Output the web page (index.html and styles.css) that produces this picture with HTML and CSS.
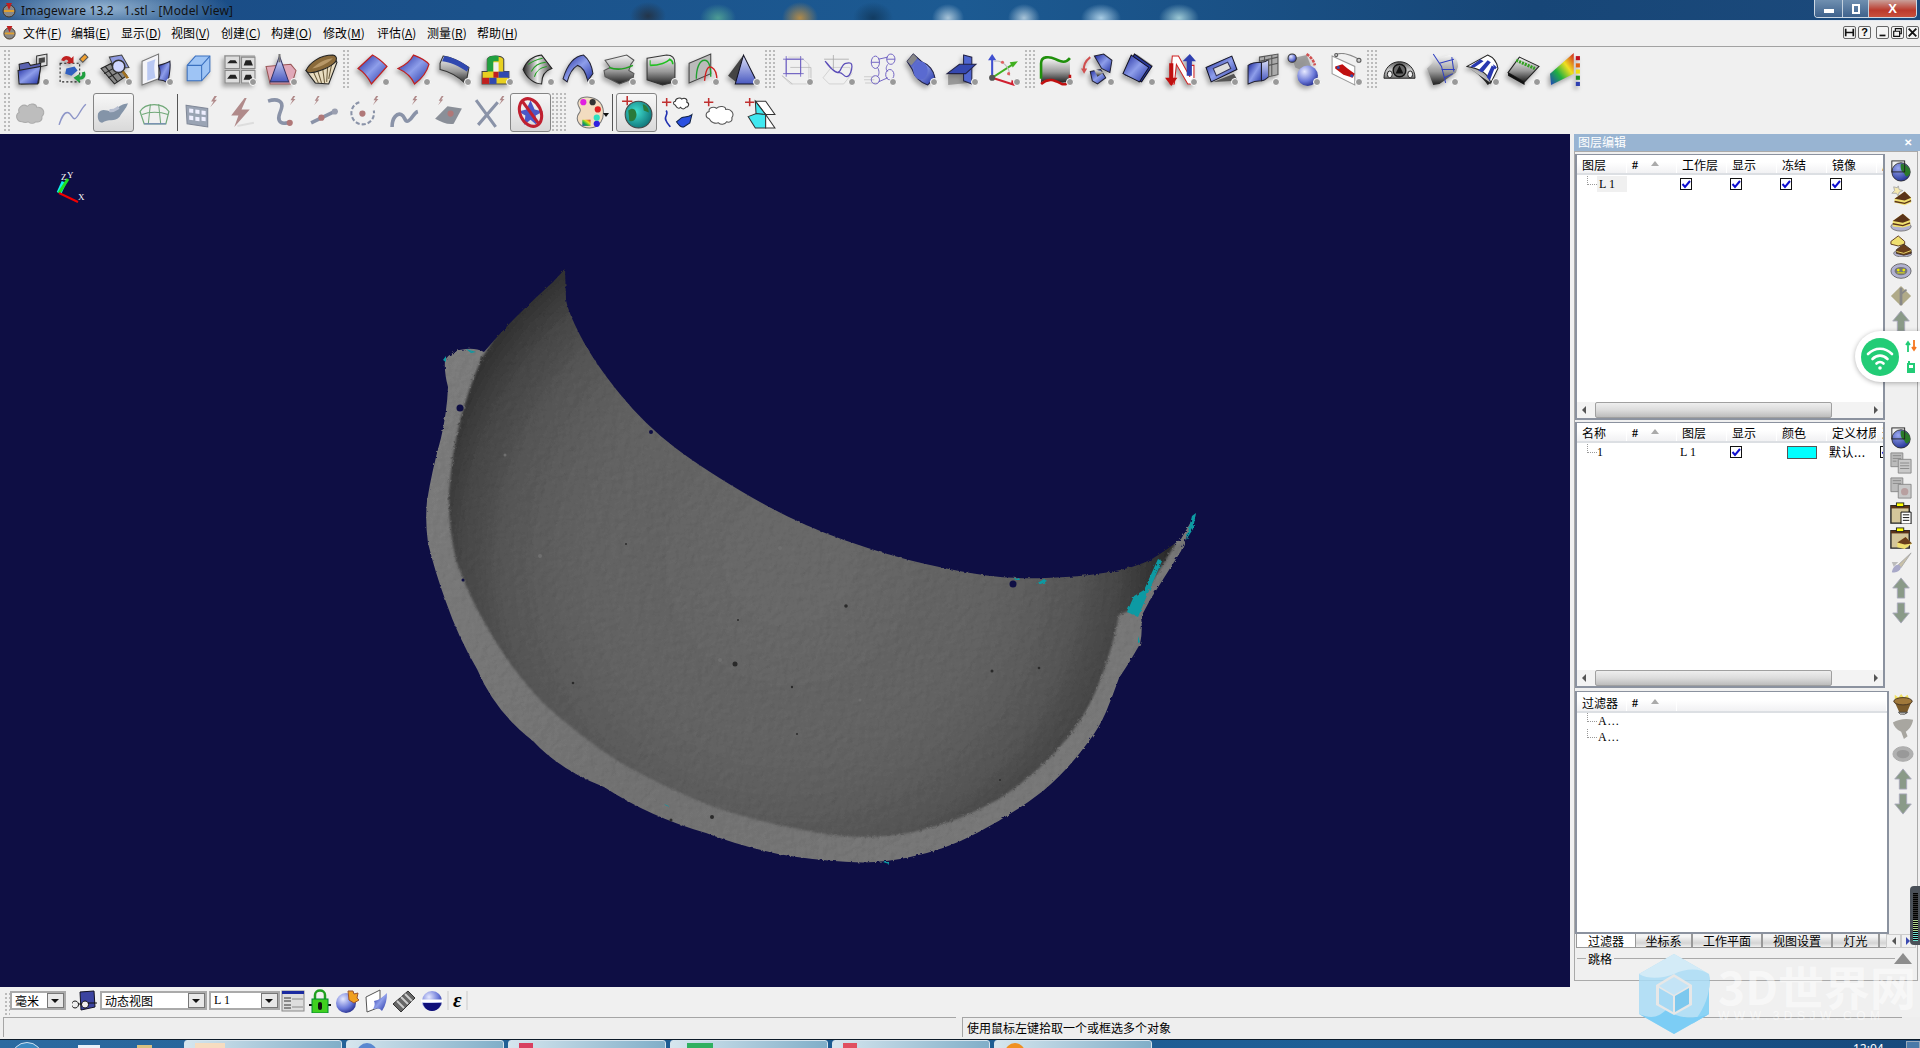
FILE: index.html
```html
<!DOCTYPE html>
<html lang="en">
<head>
    <meta charset="UTF-8">
    <title>Imageware 13.2 1.stl - [Model View]</title>
    <link rel="stylesheet" href="styles.css">
</head>
<body>

<!-- shared icons -->
<svg class="sprite" width="0" height="0">
  <defs>
    <linearGradient id="gb" x1="0" y1="0" x2="1" y2="1"><stop offset="0" stop-color="#18249a"/><stop offset=".5" stop-color="#8e9eea"/><stop offset="1" stop-color="#1f2fa2"/></linearGradient>
    <linearGradient id="gm" x1="0" y1="0" x2="0" y2="1"><stop offset="0" stop-color="#f6f6f6"/><stop offset=".55" stop-color="#9a9a9a"/><stop offset="1" stop-color="#1e1e1e"/></linearGradient>
    <linearGradient id="gd" x1="0" y1="0" x2="1" y2="0"><stop offset="0" stop-color="#222"/><stop offset=".5" stop-color="#eee"/><stop offset="1" stop-color="#444"/></linearGradient>
    <linearGradient id="gl" x1="0" y1="0" x2="0" y2="1"><stop offset="0" stop-color="#dfe3fb"/><stop offset="1" stop-color="#4a5ac0"/></linearGradient>
    <linearGradient id="gr" x1="0" y1="1" x2="1" y2="0"><stop offset="0" stop-color="#2040c0"/><stop offset=".35" stop-color="#20b040"/><stop offset=".65" stop-color="#f0e020"/><stop offset="1" stop-color="#d02020"/></linearGradient>
    <linearGradient id="gc" x1="0" y1="0" x2="0" y2="1"><stop offset="0" stop-color="#555"/><stop offset=".5" stop-color="#ccc"/><stop offset="1" stop-color="#777"/></linearGradient>
    <radialGradient id="gball" cx=".35" cy=".3" r=".8"><stop offset="0" stop-color="#e6e9ff"/><stop offset=".6" stop-color="#6a78d8"/><stop offset="1" stop-color="#1a2280"/></radialGradient>
    <radialGradient id="gearth" cx=".35" cy=".3" r=".8"><stop offset="0" stop-color="#9aa8f0"/><stop offset="1" stop-color="#1a2a90"/></radialGradient>
    <radialGradient id="gteal" cx=".4" cy=".4" r=".7"><stop offset="0" stop-color="#40e0d0"/><stop offset="1" stop-color="#0a6a70"/></radialGradient>

    <symbol id="bolt" viewBox="0 0 32 32"><path d="M25 1l-5 8h3l-4 7 8-9h-3l4-6z" fill="#b08a8a"/></symbol>

    <symbol id="t-open" viewBox="0 0 32 32"><path d="M20 3l10-2v11l-10 2z" fill="#ddd" stroke="#333"/><path d="M22 5l6-1v5l-6 1z" fill="#444"/><path d="M3 11l9-2 2 3 10-2-2 19-17 1z" fill="#5a62b0" stroke="#222"/><path d="M2 17l22-4-3 17-18 0z" fill="url(#gb)" stroke="#222"/></symbol>
    <symbol id="t-edit" viewBox="0 0 32 32"><rect x="3" y="10" width="19" height="18" fill="none" stroke="#222" stroke-dasharray="2 2"/><path d="M4 7c2-5 7-5 10-2l2-2v7h-7l2-2c-1-2-3-2-4 0z" fill="#c02020"/><path d="M22 6l5-5 3 3-5 5z" fill="#f0a030" stroke="#555"/><path d="M9 15l8-2 3 4-6 5-6-2z" fill="#3060c0"/><path d="M27 18c2 5-1 8-5 8v3l-6-5 6-4v3c2 0 3-2 2-4z" fill="#20a040"/></symbol>
    <symbol id="t-mesh" viewBox="0 0 32 32"><path d="M2 15l14-7 11 14-12 8z" fill="#888" stroke="#222"/><path d="M6 13l12 15M11 10l12 15M5 20l14-8M9 24l14-8" stroke="#222" fill="none"/><path d="M10 4l12-2 7 12-14 1z" fill="#8f9ae0" stroke="#444"/><circle cx="19" cy="13" r="6" fill="#cfd6ff" stroke="#333" stroke-width="1.5"/><path d="M23 18l6 8" stroke="#a07020" stroke-width="2.5"/></symbol>
    <symbol id="t-planes" viewBox="0 0 32 32"><path d="M2 8l16-7v24L2 31z" fill="#f4f4f8" stroke="#777"/><path d="M7 9l8-3c-2 6-1 13 0 18l-8 3z" fill="#b9c8f2"/><path d="M18 12c4-1 8-2 11-4 1 7-1 15-2 21-3-2-6-3-9-3 2-5 2-9 0-14z" fill="url(#gb)" stroke="#223"/></symbol>
    <symbol id="t-cube" viewBox="0 0 32 32"><path d="M6 12l8-9h14v15l-8 9H6z" fill="#9ec4f5" stroke="#3a70c0"/><path d="M6 12h14v15M20 12l8-9" fill="none" stroke="#3a70c0"/></symbol>
    <symbol id="t-panel" viewBox="0 0 32 32"><path d="M1 2h30v28H1z" fill="#bbb"/><path d="M2 3h14v12H2zM18 4h13v11H18zM2 17h14v12H2zM18 17h13v12H18z" fill="#ddd" stroke="#888"/><path d="M4 10h10l-2-3H7zM20 12h9l-2-5h-5zM4 25h10l-2-4H7zM20 26h9l-2-5h-5z" fill="#222"/></symbol>
    <symbol id="t-pink" viewBox="0 0 32 32"><path d="M2 13l24-2 5 6-4 13-21 0z" fill="#e0a8b8" stroke="#955"/><path d="M15 3l-9 25h18z" fill="url(#gl)" stroke="#336"/><path d="M15 1v8" stroke="#777" stroke-width="2"/></symbol>
    <symbol id="t-filter" viewBox="0 0 32 32"><path d="M1 17L5 14 28 3l3 6-8 21-13-1z" fill="#e8dcc0" stroke="#222"/><path d="M8 18l5 11M12 16l4 13M17 14l2 15M22 12l-1 16M26 10l-3 15" stroke="#6a5a3a"/><path d="M1 17C4 10 14 2 27 2c5 1 4 6 1 8C22 15 9 20 3 19z" fill="#8a6a3a" stroke="#222"/><path d="M7 15c5-5 12-9 20-10-5 5-13 9-20 10z" fill="#b89868"/></symbol>
    <symbol id="t-surf1" viewBox="0 0 32 32"><path d="M2 15L16 2c4 2 9 6 14 11L15 30C12 24 7 18 2 15z" fill="url(#gb)" stroke="#c02020" stroke-width="1.2"/></symbol>
    <symbol id="t-surf2" viewBox="0 0 32 32"><path d="M1 15C8 12 13 8 16 2c5 2 11 4 15 9-2 7-7 14-14 19-3-7-9-12-16-15z" fill="url(#gb)" stroke="#c02020" stroke-width="1.2"/></symbol>
    <symbol id="t-metal" viewBox="0 0 32 32"><path d="M2 10l3-7c8 1 16 5 25 11l-3 16C20 23 11 18 2 16z" fill="url(#gm)" stroke="#333"/><path d="M4 8l2-5c8 1 16 5 24 11l-2 4C21 13 12 9 4 8z" fill="#3048b0"/></symbol>
    <symbol id="t-patch" viewBox="0 0 32 32"><path d="M3 30V18h5V6c2-4 14-4 16 0v12h5v12z" fill="#e8d020" stroke="#444"/><path d="M8 18h6V8h5V3c-5-1-10 0-11 3z" fill="#20a040"/><path d="M14 18h5v6h-5z" fill="#c02020"/><path d="M19 18h10v6H19z" fill="#3048b0"/><path d="M3 24h7v6H3z" fill="#c02020"/><path d="M10 24h7v6h-7z" fill="#3048b0"/><path d="M14 18V9h5v9" fill="#f0f0f0"/></symbol>
    <symbol id="t-green" viewBox="0 0 32 32"><path d="M2 16C5 8 12 3 20 2l10 13c-7 2-10 7-10 15C13 30 6 25 2 16z" fill="url(#gd)" stroke="#222"/><path d="M7 11c4-3 9-5 14-6M10 18c3-6 7-8 14-9M13 23c2-6 5-9 12-10" stroke="#20a020" fill="none"/></symbol>
    <symbol id="t-arch" viewBox="0 0 32 32"><path d="M1 25C5 12 11 3 21 2c5 4 8 10 9 18l-5 7C23 19 19 13 15 12 10 15 7 20 5 28z" fill="url(#gb)" stroke="#223"/></symbol>
    <symbol id="t-fold" viewBox="0 0 32 32"><path d="M2 7l21-5 7 5-3 4-2 6 5 3-1 5-13 5-14-7-1-6 6-3z" fill="url(#gm)" stroke="#555"/><path d="M6 14c8 3 15 2 23-2" stroke="#20a020" stroke-width="1.5" fill="none"/></symbol>
    <symbol id="t-sheet" viewBox="0 0 32 32"><path d="M2 5l19-3c6 0 8 4 8 8v18L17 31 2 26z" fill="url(#gm)" stroke="#333"/><path d="M5 12c9 0 17-3 19-6 2 1 3 3 3 5" stroke="#20c020" stroke-width="1.5" fill="none"/><path d="M5 12v-5" stroke="#20c020"/></symbol>
    <symbol id="t-plane" viewBox="0 0 32 32"><path d="M3 10L24 1v19L3 29z" fill="#bbb" stroke="#444"/><path d="M10 25c0-10 3-18 8-18s6 8 6 16" stroke="#20a030" fill="none" stroke-width="1.3"/><path d="M18 27c1-10 3-15 7-13s5 8 5 13" stroke="#d02020" fill="none" stroke-width="1.3"/></symbol>
    <symbol id="t-pyr" viewBox="0 0 32 32"><path d="M16 2L1 22l9 7z" fill="#444"/><path d="M16 2L8 30h22z" fill="url(#gl)" stroke="#112"/></symbol>
    <symbol id="t-wire" viewBox="0 0 32 32"><path d="M2 22l8 8h18V11l-8-7H8" fill="none" stroke="#ccc" stroke-width=".8"/><path d="M2 22l10 8M10 14h20v13" fill="none" stroke="#bbb" stroke-width=".8"/><path d="M6 6h14v14H6zM6 3v20M3 6h20M20 3v20M3 20h20" fill="none" stroke="#6a5cc0" stroke-width=".8"/></symbol>
    <symbol id="t-wire2" viewBox="0 0 32 32"><path d="M2 24l8-10h18l2 6-8 10H8z" fill="none" stroke="#ccc" stroke-width=".8"/><path d="M12 2v14M3 6h24" stroke="#aaa" stroke-width=".8"/><path d="M4 8c6 6 8 11 12 11s3-8 8-9 6 0 6 3-2 10-5 10-4-4-7-4-6-2-9-5-5-6-5-6z" fill="none" stroke="#5a4cb8" stroke-width="1.200"/></symbol>
    <symbol id="t-rings" viewBox="0 0 32 32"><path d="M1 23h10M1 26h10M2 29h12" stroke="#ccc"/><g fill="none" stroke="#6a5cc0" stroke-width=".9"><ellipse cx="12" cy="9" rx="4" ry="6"/><ellipse cx="27" cy="6" rx="4" ry="5"/><ellipse cx="26" cy="21" rx="4" ry="5"/><ellipse cx="12" cy="26" rx="4" ry="4"/><path d="M14 14c2 3 2 7 0 9M24 11c-2 3-2 5 0 7M15 6l9-2M15 28l9-4M8 9h8M23 6h8"/></g></symbol>
    <symbol id="t-caps" viewBox="0 0 32 32"><path d="M3 8l6-7 9 8c6 2 11 8 12 15l-7 7c-7-2-13-8-15-15z" fill="url(#gb)" stroke="#224"/><path d="M3 8l6-7 4 4-6 7z" fill="#888"/><ellipse cx="16" cy="17" rx="7" ry="9" fill="#5a6ad0"/></symbol>
    <symbol id="t-cross" viewBox="0 0 32 32"><path d="M3 21L22 12v17L3 31z" fill="#222" opacity=".35"/><path d="M18 2l8 2v26l-8-3z" fill="#5066d0" stroke="#224"/><path d="M2 20L14 11h16L20 20z" fill="#3548b0" stroke="#224"/></symbol>
    <symbol id="t-axes" viewBox="0 0 32 32"><path d="M5 24V4" stroke="#4050d0" stroke-width="2"/><path d="M5 1l-4 6h8z" fill="#4050d0"/><path d="M5 24l20-13" stroke="#40b020" stroke-width="2"/><path d="M30 8l-8 1 3 5z" fill="#40b020"/><path d="M5 24l22 7" stroke="#d02030" stroke-width="2"/><path d="M30 31l-6-5-1 5z" fill="#d02030"/><path d="M7 8c8-2 15 6 15 14" stroke="#bbb" fill="none"/><circle cx="5" cy="24" r="3" fill="#555"/><circle cx="15" cy="9" r="1.5" fill="#e06060"/><circle cx="21" cy="20" r="1.5" fill="#e06060"/></symbol>
    <symbol id="t-curves" viewBox="0 0 32 32"><path d="M2 8c8-7 16 5 28-3v22c-12 6-20-6-28 2z" fill="url(#gm)"/><path d="M2 25V10C2 3 10 3 16 6s10 4 14-1" fill="none" stroke="#20900c" stroke-width="2.5"/><path d="M2 30c8-7 14-3 20 0 3 1 7 0 8-4v-5" fill="none" stroke="#c01010" stroke-width="2.5"/></symbol>
    <symbol id="t-rot" viewBox="0 0 32 32"><path d="M13 3l9-2 8 6-2 12-8-4z" fill="url(#gb)" stroke="#223"/><path d="M9 18l10-2 5 8-8 6-5-3z" fill="url(#gb)" stroke="#223"/><path d="M12 15l10 4-6 4z" fill="url(#gm)"/><path d="M9 4C4 8 2 12 3 17" stroke="#d05050" stroke-width="2" fill="none"/><path d="M0 15l6 0-3 5z" fill="#d05050"/></symbol>
    <symbol id="t-stack" viewBox="0 0 32 32"><path d="M14 1l16 11-14 17" fill="#222" opacity=".35"/><path d="M12 1l17 12-10 15L3 21z" fill="#2a3aa0" stroke="#112"/><path d="M9 2l17 12-9 14L1 20z" fill="url(#gb)" stroke="#112"/></symbol>
    <symbol id="t-nred" viewBox="0 0 32 32"><path d="M7 30L9 3h6l11 20V12h4v18h-6L13 11l-2 19z" fill="#fff" stroke="#d02020"/><path d="M6 10h4v14h4l-6 8-6-8h4z" fill="#c01010"/><path d="M23 10V8h-4l7-7 6 7h-4v14h-5z" fill="#3040b0"/></symbol>
    <symbol id="t-frame" viewBox="0 0 32 32"><path d="M1 14L26 3l5 13-25 12z" fill="url(#gb)" stroke="#112"/><path d="M8 15l14-6 3 6-14 7z" fill="#ddd" stroke="#335"/><path d="M8 28l24-1-4-7z" fill="#555"/></symbol>
    <symbol id="t-wave" viewBox="0 0 32 32"><path d="M2 12c4-3 8-3 13-3v18C10 27 6 28 2 30z" fill="url(#gb)" stroke="#223"/><path d="M15 9c3 0 5-1 7-3v17c-2 2-5 4-7 4z" fill="url(#gl)" stroke="#223"/><path d="M13 4l18-3v20l-9 2V6L13 8z" fill="#aaa" stroke="#555"/><path d="M18 3v5M25 2v20M22 12l9-2M22 6l9-2" stroke="#555"/></symbol>
    <symbol id="t-ball" viewBox="0 0 32 32"><path d="M5 5l14-3 8 20-19-8z" fill="#888" opacity=".75"/><circle cx="5" cy="5" r="4" fill="url(#gball)" stroke="#333"/><circle cx="20" cy="22" r="10" fill="url(#gball)"/><path d="M19 1c4 3 7 6 8 11" stroke="#d05050" stroke-width="2.5" stroke-dasharray="3 1" fill="none"/></symbol>
    <symbol id="t-car" viewBox="0 0 32 32"><path d="M3 3l22 10v18L3 20z" fill="#fff" stroke="#999"/><path d="M6 13l7-2 5 4 7 5-2 4-9-3-8-6z" fill="#c01010"/><circle cx="9" cy="14" r="1.5" fill="#3050b0"/><circle cx="22" cy="22" r="1.5" fill="#3050b0"/><path d="M8 1c6-2 12 0 21 5" stroke="#888" fill="none"/><circle cx="7" cy="2" r="1.5" fill="#ccc" stroke="#555"/><circle cx="29" cy="7" r="2" fill="#ccc" stroke="#555"/></symbol>
    <symbol id="t-dash" viewBox="0 0 34 32"><path d="M1 25C1 15 8 8 17 8s16 7 16 17z" fill="url(#gc)" stroke="#222"/><circle cx="17" cy="17" r="6.5" fill="#666" stroke="#111" stroke-width="1.5"/><path d="M17 12l4 8h-8z" fill="#111"/><ellipse cx="7" cy="21" rx="2.5" ry="3.5" fill="#eee" stroke="#222"/><ellipse cx="28" cy="21" rx="2.5" ry="3.5" fill="#eee" stroke="#222"/></symbol>
    <symbol id="t-net" viewBox="0 0 32 32"><path d="M2 15L12 5l12-3c5 1 8 5 8 11l-2 6-16 11-6 1C6 26 4 20 2 15z" fill="url(#gm)"/><path d="M8 1l8 12 4 16M14 10l14-4M16 16l13 0M19 24l8-4M26 4l2 14" stroke="#3040c0" fill="none"/></symbol>
    <symbol id="t-stripes" viewBox="0 0 32 32"><path d="M1 13L21 2c5 2 9 7 10 13l-7 14c-2-8-10-14-23-16z" fill="#fff" stroke="#222"/><path d="M4 13L14 6l3 2L8 14zM12 17l9-10 3 2-8 10zM20 23l5-11 3 2-5 13zM26 11l2 1 2 2-2 2z" fill="#2838b0"/><path d="M1 13l23 16-3 2C16 23 8 18 1 13z" fill="#222"/></symbol>
    <symbol id="t-ridge" viewBox="0 0 32 32"><path d="M1 19L12 4l19 9-14 15z" fill="url(#gm)" stroke="#222"/><path d="M9 7l18 8" stroke="#30a020" stroke-width="3" stroke-dasharray="2 1"/><path d="M1 19l16 9 0 3L1 22z" fill="#111"/></symbol>
    <symbol id="t-rainbow" viewBox="0 0 32 32"><path d="M1 20L24 0v20L2 31z" fill="url(#gr)"/><rect x="26" y="3" width="4" height="4" fill="#c01020"/><rect x="26" y="10" width="4" height="4" fill="#e06010"/><rect x="26" y="16" width="4" height="4" fill="#f0e010"/><rect x="26" y="22" width="4" height="4" fill="#209020"/><rect x="26" y="28" width="4" height="4" fill="#3040b0"/></symbol>

    <symbol id="r-cloud" viewBox="0 0 32 32"><path d="M7 25c-6 0-7-7-3-9-2-5 4-9 8-6 3-4 9-2 9 1 6-1 9 5 5 9 1 4-3 6-6 5-2 2-5 2-7 0-2 1-4 1-6 0z" fill="#bdbdbd" stroke="#aaa"/></symbol>
    <symbol id="r-curve" viewBox="0 0 32 32"><path d="M3 28c2-6 4-12 8-12s4 6 7 6 6-10 11-14" fill="none" stroke="#8e96c8" stroke-width="1.4"/></symbol>
    <symbol id="r-surf" viewBox="0 0 32 32"><path d="M1 17c5-8 11 1 17-4 4-4 7-5 12-6-2 6-6 9-8 13-5 6-11 1-17 6-3 0-5-4-4-9z" fill="#8494a8"/><path d="M12 14c4 1 6-1 9-3" stroke="#b6bed0" stroke-width="3" fill="none"/></symbol>
    <symbol id="r-fan" viewBox="0 0 32 32"><path d="M2 15C7 6 24 6 30 15l-3 12H6z" fill="none" stroke="#70a878" stroke-width="1.2"/><path d="M12 8l-2 19M20 8l2 19M4 18c7-3 17-3 25 0" fill="none" stroke="#70a878"/><path d="M6 27h21" stroke="#7080c0"/></symbol>
    <symbol id="r-grid" viewBox="0 0 32 32"><path d="M2 9l21 3v18L3 27z" fill="#9aa4b4" stroke="#808898"/><path d="M5 12l4 .6v4l-4-.5zM11 13l4 .5v4l-4-.5zM17 14l4 .5v4l-4-.5zM5 19l4 .5v4l-4-.5zM11 20l4 .5v4l-4-.5zM17 20l4 .5v4l-4-.5z" fill="#eef"/><use href="#bolt" width="26" height="26" x="10" y="-2"/></symbol>
    <symbol id="r-bolt" viewBox="0 0 32 32"><path d="M19 2L6 19h7l-4 11 15-17h-8l5-11z" fill="#b08a8a"/><path d="M12 29l16-3" stroke="#ddd" stroke-width="2"/></symbol>
    <symbol id="r-s" viewBox="0 0 32 32"><path d="M2 5c9-3 15 0 13 7s-4 8-2 12 5 2 9 2" fill="none" stroke="#8a93a8" stroke-width="3.5"/><circle cx="23" cy="26" r="3" fill="#b07878"/><use href="#bolt" width="22" height="22" x="10" y="-2"/></symbol>
    <symbol id="r-seg" viewBox="0 0 32 32"><path d="M3 26l25-12" stroke="#8a93a8" stroke-width="3.5"/><circle cx="13" cy="21" r="3" fill="#b07878"/><circle cx="26" cy="15" r="3" fill="#9a9fb0"/><use href="#bolt" width="20" height="20" x="-6" y="-1"/></symbol>
    <symbol id="r-circ" viewBox="0 0 32 32"><path d="M10 6a11 11 0 1 0 14 8" fill="none" stroke="#8a93a8" stroke-width="2" stroke-dasharray="4 2"/><circle cx="13" cy="17" r="3" fill="#b07878"/><use href="#bolt" width="22" height="22" x="10" y="-2"/></symbol>
    <symbol id="r-wav" viewBox="0 0 32 32"><path d="M2 30c0-9 5-14 9-12s3 8 7 6 5-8 9-9" fill="none" stroke="#8a93a8" stroke-width="3.5"/><use href="#bolt" width="22" height="22" x="8" y="-2"/></symbol>
    <symbol id="r-sf" viewBox="0 0 32 32"><path d="M3 22l12-12 14 2-8 15c-6 1-12-2-18-5z" fill="#8a8f98"/><circle cx="18" cy="17" r="3" fill="#b07878"/><use href="#bolt" width="20" height="20" x="-6" y="-1"/></symbol>
    <symbol id="r-x" viewBox="0 0 32 32"><path d="M3 4l19 26M24 6L5 28" stroke="#8a93a8" stroke-width="3"/><use href="#bolt" width="22" height="22" x="12" y="-2"/></symbol>
    <symbol id="r-no" viewBox="0 0 32 32"><path d="M16 4l4 9 8 2-7 4 1 9-6-5-6 5 1-9-7-4 8-2z" fill="#4a58c8"/><ellipse cx="16" cy="16" rx="10" ry="14" fill="none" stroke="#c02030" stroke-width="3" transform="rotate(-25 16 16)"/><path d="M8 5l16 22" stroke="#c02030" stroke-width="3"/></symbol>
    <symbol id="r-pal" viewBox="0 0 32 32"><path d="M9 2c8-3 19 1 21 10 2 10-3 19-13 19C8 31 3 24 6 18c2-3 3-4 1-7C5 8 5 4 9 2z" fill="#f2dcc0" stroke="#777"/><circle cx="11" cy="6" r="3" fill="#e020e0"/><circle cx="20" cy="6" r="3" fill="#333"/><circle cx="25" cy="13" r="3" fill="#e02020"/><circle cx="24" cy="21" r="3" fill="#30e0c0"/><circle cx="24" cy="27" r="3" fill="#3020e0"/><rect x="10" y="23" width="8" height="6" fill="url(#gr)"/></symbol>
    <symbol id="r-globe" viewBox="0 0 32 32"><path d="M7 0v9M2 5h10" stroke="#c03030" stroke-width="1.5"/><circle cx="18" cy="18" r="13" fill="url(#gteal)" stroke="#444"/><path d="M8 14c5-4 8 0 8 4s-3 8-7 6zM22 8c3 0 6 4 6 8l-5-2z" fill="#2a7a3a"/></symbol>
    <symbol id="r-cloudsf" viewBox="0 0 32 32"><path d="M1 6h9M5.500 2v8" stroke="#c03030" stroke-width="1.500"/><path d="M14 9c-3-1-2-4 0-4 0-3 5-4 6-2 3-2 6 0 5 3 3 1 2 5-1 5-1 2-4 2-5 0-2 2-4 0-5-2z" fill="#fff" stroke="#333"/><path d="M5 14c3 4-3 6 0 10 1 3 3 4 4 6" fill="none" stroke="#2030b0" stroke-width="1.500"/><path d="M15 25l5-4c3-1 6 0 10-3l-2 8-6 4c-3 1-5-2-7-5z" fill="#2a50e0" stroke="#124"/></symbol>
    <symbol id="r-cloudp" viewBox="0 0 32 32"><path d="M1 6h9M5.500 2v8" stroke="#c03030" stroke-width="1.500"/><path d="M6 22c-4-1-4-6 0-7-1-4 5-5 7-3 3-3 9-2 9 1 5-1 9 4 6 8 1 4-3 5-5 4-2 3-6 3-8 1-3 1-7 0-9-4z" fill="#fff" stroke="#555"/></symbol>
    <symbol id="r-tri" viewBox="0 0 32 32"><path d="M1 6h9M5.500 2v8" stroke="#c03030" stroke-width="1.500"/><path d="M11 5h10l9 13-9 0z" fill="#fff" stroke="#333"/><path d="M11 5l10 13-9 5z" fill="#40e8f0" stroke="#333"/><path d="M4 20l8-3 9 1 0 13H11z" fill="#40e8f0" stroke="#333"/><path d="M21 18l9 13H21z" fill="#fff" stroke="#333"/></symbol>

    <symbol id="s-globe" viewBox="0 0 24 24"><circle cx="12" cy="13" r="10" fill="url(#gearth)" stroke="#333"/><path d="M12 4c5 0 10 4 10 9 0 3-2 3-3 5-2 1-3-4-5-5s-3-6-2-9z" fill="#2a7a2a"/><rect x="2" y="1" width="14" height="12" fill="none" stroke="#222"/></symbol>
    <symbol id="s-cake1" viewBox="0 0 24 24"><path d="M9 1l1 4 4 1-4 2-1 4-2-3-5 0 3-3-1-4 4 1z" fill="#f6eab0" stroke="#aaa"/><path d="M5 15l11-8 7 7v5l-7 3-11-3z" fill="#f0e070"/><path d="M5 15l11-8 7 7-7 3z" fill="#5a3318"/><path d="M5 18l11 2 7-3" stroke="#5a3318" stroke-width="1.500" fill="none"/></symbol>
    <symbol id="s-cake" viewBox="0 0 24 24"><ellipse cx="12" cy="18" rx="11" ry="5" fill="#b0b0d0" stroke="#777"/><path d="M3 12L14 4l8 7v6l-8 2-11-1z" fill="#f0e070"/><path d="M3 12L14 4l8 7-8 3z" fill="#5a3318"/><path d="M3 15l11 2 8-3" stroke="#5a3318" stroke-width="1.500" fill="none"/></symbol>
    <symbol id="s-cakes" viewBox="0 0 24 24"><ellipse cx="14" cy="20" rx="10" ry="4" fill="#b0b0d0" stroke="#777"/><path d="M1 7L9 1l7 6v3l-7 2-8-2z" fill="#f0e070" stroke="#5a3318"/><path d="M7 16l8-6 8 6v4l-8 2-8-2z" fill="#6a3f1c" stroke="#432"/><path d="M7 18l8 2 8-3" stroke="#f0e070" fill="none"/></symbol>
    <symbol id="s-eye" viewBox="0 0 24 24"><ellipse cx="12" cy="12" rx="11" ry="8" fill="#b0b0d0" stroke="#666"/><ellipse cx="12" cy="12" rx="7" ry="4.500" fill="#777"/><circle cx="9" cy="11" r="1.500" fill="#ee0"/><circle cx="15" cy="11" r="1.500" fill="#ee0"/><path d="M8 14h8" stroke="#ee0"/></symbol>
    <symbol id="s-diamond" viewBox="0 0 24 24"><path d="M12 1l11 11-11 11L1 12z" fill="#b0aa88"/><path d="M12 3v19" stroke="#888" stroke-width="3"/><path d="M12 10l6-5" stroke="#888" stroke-width="2"/></symbol>
    <symbol id="s-up" viewBox="0 0 24 24"><path d="M12 1l9 11h-5v11H8V12H3z" fill="#8a9a88" stroke="#aab"/></symbol>
    <symbol id="s-down" viewBox="0 0 24 24"><path d="M12 23l9-11h-5V1H8v11H3z" fill="#8a9a88" stroke="#aab"/></symbol>
    <symbol id="s-docs" viewBox="0 0 24 24"><path d="M1 1h13v15H1z" fill="#bbb" stroke="#888"/><path d="M9 8h14v15H9z" fill="#c8c8c8" stroke="#888"/><path d="M3 4h9M3 7h9M3 10h4M11 12h10M11 15h10M11 18h10" stroke="#888"/></symbol>
    <symbol id="s-docs2" viewBox="0 0 24 24"><path d="M1 1h13v15H1z" fill="#bbb" stroke="#888"/><path d="M9 8h14v15H9z" fill="#c8c8c8" stroke="#888"/><path d="M3 4h9M3 7h9" stroke="#888"/><circle cx="16" cy="16" r="4" fill="#b8a0a0"/></symbol>
    <symbol id="s-clip" viewBox="0 0 24 24"><path d="M1 4h20v19H1z" fill="#d4c69a" stroke="#222" stroke-width="1.500"/><path d="M1 4h20v3H1z" fill="#5a3318"/><rect x="7" y="1" width="8" height="4" fill="#ff0" stroke="#222"/><path d="M12 11h11v13H12z" fill="#fff" stroke="#000"/><path d="M14 14h7M14 17h7M14 20h7" stroke="#000"/></symbol>
    <symbol id="s-clip2" viewBox="0 0 24 24"><path d="M1 4h20v19H1z" fill="#d4c69a" stroke="#222" stroke-width="1.500"/><path d="M1 4h20v3H1z" fill="#5a3318"/><rect x="7" y="1" width="8" height="4" fill="#ff0" stroke="#222"/><path d="M8 17l9-6 7 7-8 6-8-2z" fill="#f0e070"/><path d="M8 17l9-6 7 7-8 1z" fill="#6a3f1c"/></symbol>
    <symbol id="s-brush" viewBox="0 0 24 24"><path d="M23 1L9 14l3 3z" fill="#c8c0a8" stroke="#aaa"/><path d="M2 22c1-5 4-9 8-8l2 3c-1 4-5 6-10 5z" fill="#a8a8c8"/><path d="M2 11l7 0-5 5z" fill="#bbb"/></symbol>
    <symbol id="s-cup" viewBox="0 0 24 24"><path d="M3 2l4 3 3-4 3 4 4-3 2 5H3z" fill="#f0e060"/><path d="M2 8c3 3 16 3 20 0l-6 14c-3 2-6 1-8-1z" fill="#7a5a2a"/><ellipse cx="12" cy="9" rx="10" ry="4" fill="#a0783a" stroke="#432"/><path d="M7 21h10l-3 2h-5z" fill="#eee" stroke="#444"/></symbol>
    <symbol id="s-funnel" viewBox="0 0 24 24"><path d="M1 5c6-4 15-5 22-3-1 7-5 11-8 13l2 5-4 3-3-8C5 13 2 9 1 5z" fill="#a8a6a0"/></symbol>
    <symbol id="s-eye2" viewBox="0 0 24 24"><ellipse cx="12" cy="12" rx="11" ry="8" fill="#b0b0b0" stroke="#aaa"/><ellipse cx="12" cy="12" rx="7" ry="4.500" fill="#999"/></symbol>

    <symbol id="b-glasses" viewBox="0 0 26 24"><path d="M8 3l14-1 1 16-14 3z" fill="#3c44a0" stroke="#112"/><path d="M3 12a3.500 3.500 0 1 0 .1 0zM13 12a3.500 3.500 0 1 0 .1 0zM6 15h4M16 14h9" fill="#eee" stroke="#111"/></symbol>
    <symbol id="b-list" viewBox="0 0 24 24"><rect x="1" y="2" width="22" height="20" fill="#ddd" stroke="#888"/><rect x="1" y="2" width="22" height="3" fill="#1a2aa0"/><path d="M3 9h7M3 12h7M3 16h7M3 19h7" stroke="#333"/><path d="M11 10h11M11 18h11" stroke="#888"/></symbol>
    <symbol id="b-lock" viewBox="0 0 24 24"><path d="M7 11V6c0-6 10-6 10 0v5" fill="none" stroke="#20a020" stroke-width="2.500"/><path d="M1 16h22" stroke="#111" stroke-width="2"/><rect x="4" y="10" width="16" height="14" fill="#40d020" stroke="#083"/><rect x="10" y="13" width="4" height="8" fill="#111" rx="2"/></symbol>
    <symbol id="b-ball" viewBox="0 0 24 24"><circle cx="10" cy="14" r="10" fill="url(#gball)"/><path d="M12 2h5l1 3 4-1-1 5 2 2-5 3-5-3z" fill="#f0a020" stroke="#953"/></symbol>
    <symbol id="b-plane" viewBox="0 0 24 24"><path d="M2 8L16 1v17L3 23z" fill="#fff" stroke="#555"/><path d="M10 12c5-1 9-4 13-8 0 6-1 12-5 18-2-3-5-3-9-2 2-3 2-6 1-8z" fill="url(#gb)"/></symbol>
    <symbol id="b-coil" viewBox="0 0 24 24"><path d="M1 15L16 2l7 7L9 23z" fill="#666" stroke="#333"/><path d="M5 12l7 7M9 8l7 7M13 5l7 7" stroke="#ccc" stroke-width="2"/></symbol>
    <symbol id="b-sphere" viewBox="0 0 24 24"><circle cx="12" cy="12" r="10" fill="url(#gball)"/><path d="M1 12h22" stroke="#fff" stroke-width="3"/><path d="M3 14h18c-1 5-5 8-9 8s-8-3-9-8z" fill="#10107a"/></symbol>

    <symbol id="m-h" viewBox="0 0 13 13"><path d="M2 2v9M11 2v9M2 6.500h9" stroke="#111" stroke-width="2"/></symbol>
    <symbol id="m-min" viewBox="0 0 13 13"><path d="M3 10h7" stroke="#111" stroke-width="2"/></symbol>
    <symbol id="m-max" viewBox="0 0 13 13"><path d="M2 5h7v6H2zM4 5V2h7v6H9" fill="none" stroke="#111" stroke-width="1.400"/></symbol>
    <symbol id="m-x" viewBox="0 0 13 13"><path d="M2 2l9 9M11 2l-9 9" stroke="#111" stroke-width="2.200"/></symbol>
  </defs>
</svg>

<div class="title-bar">
    <svg class="app-logo" viewBox="0 0 16 16"><circle cx="8" cy="9" r="6" fill="#888" stroke="#432"/><path d="M5 1l6 0-3 7z" fill="#c02020"/><path d="M3 9h10" stroke="#e0a030" stroke-width="2"/></svg>
    <span class="title-text">Imageware 13.2&nbsp;&nbsp;&nbsp;1.stl - [Model View]</span>
    <div class="win-controls">
        <div class="win-btn win-min"><i></i></div>
        <div class="win-btn win-max"><i></i></div>
        <div class="win-btn win-close">X</div>
    </div>
</div>

<div class="menu-bar">
    <svg class="menu-logo" viewBox="0 0 16 16"><circle cx="8" cy="9" r="6" fill="#888" stroke="#432"/><path d="M5 1l6 0-3 7z" fill="#c02020"/><path d="M3 9h10" stroke="#e0a030" stroke-width="2"/></svg>
    <span class="menu-item menu-item-first">文件(<u>F</u>)</span>
    <span class="menu-item">编辑(<u>E</u>)</span>
    <span class="menu-item">显示(<u>D</u>)</span>
    <span class="menu-item">视图(<u>V</u>)</span>
    <span class="menu-item">创建(<u>C</u>)</span>
    <span class="menu-item menu-item-o">构建(<u>O</u>)</span>
    <span class="menu-item menu-item-m">修改(<u>M</u>)</span>
    <span class="menu-item">评估(<u>A</u>)</span>
    <span class="menu-item">测量(<u>R</u>)</span>
    <span class="menu-item">帮助(<u>H</u>)</span>
    <div class="mdi-btns">
        <span class="mdi-btn"><svg><use href="#m-h"/></svg></span>
        <span class="mdi-btn mdi-help">?</span>
        <span class="mdi-btn mdi-gap"><svg><use href="#m-min"/></svg></span>
        <span class="mdi-btn"><svg><use href="#m-max"/></svg></span>
        <span class="mdi-btn"><svg><use href="#m-x"/></svg></span>
    </div>
</div>

<div class="toolbars">
    <div class="tool-row row-shadow">
        <div class="grip"></div>
        <div class="tool more"><svg><use href="#t-open"/></svg></div>
        <div class="tool more"><svg><use href="#t-edit"/></svg></div>
        <div class="tool more"><svg><use href="#t-mesh"/></svg></div>
        <div class="tool more"><svg><use href="#t-planes"/></svg></div>
        <div class="tool"><svg><use href="#t-cube"/></svg></div>
        <div class="tool more"><svg><use href="#t-panel"/></svg></div>
        <div class="tool more"><svg><use href="#t-pink"/></svg></div>
        <div class="tool"><svg><use href="#t-filter"/></svg></div>
        <div class="grip"></div>
        <div class="tool more"><svg><use href="#t-surf1"/></svg></div>
        <div class="tool more"><svg><use href="#t-surf2"/></svg></div>
        <div class="tool more"><svg><use href="#t-metal"/></svg></div>
        <div class="tool more"><svg><use href="#t-patch"/></svg></div>
        <div class="tool more"><svg><use href="#t-green"/></svg></div>
        <div class="tool more"><svg><use href="#t-arch"/></svg></div>
        <div class="tool more"><svg><use href="#t-fold"/></svg></div>
        <div class="tool more"><svg><use href="#t-sheet"/></svg></div>
        <div class="tool more"><svg><use href="#t-plane"/></svg></div>
        <div class="tool more"><svg><use href="#t-pyr"/></svg></div>
        <div class="grip grip-wide"></div>
        <div class="tool more flat"><svg><use href="#t-wire"/></svg></div>
        <div class="tool more flat"><svg><use href="#t-wire2"/></svg></div>
        <div class="tool more flat"><svg><use href="#t-rings"/></svg></div>
        <div class="tool more"><svg><use href="#t-caps"/></svg></div>
        <div class="tool more"><svg><use href="#t-cross"/></svg></div>
        <div class="tool more flat"><svg><use href="#t-axes"/></svg></div>
        <div class="grip grip-wide"></div>
        <div class="tool more flat"><svg><use href="#t-curves"/></svg></div>
        <div class="tool more"><svg><use href="#t-rot"/></svg></div>
        <div class="tool more"><svg><use href="#t-stack"/></svg></div>
        <div class="tool more"><svg><use href="#t-nred"/></svg></div>
        <div class="tool more"><svg><use href="#t-frame"/></svg></div>
        <div class="tool more"><svg><use href="#t-wave"/></svg></div>
        <div class="tool more"><svg><use href="#t-ball"/></svg></div>
        <div class="tool more flat"><svg><use href="#t-car"/></svg></div>
        <div class="grip grip-last"></div>
        <div class="tool flat"><svg><use href="#t-dash"/></svg></div>
        <div class="tool more"><svg><use href="#t-net"/></svg></div>
        <div class="tool more"><svg><use href="#t-stripes"/></svg></div>
        <div class="tool more"><svg><use href="#t-ridge"/></svg></div>
        <div class="tool"><svg><use href="#t-rainbow"/></svg></div>
    </div>
    <div class="tool-row">
        <div class="grip grip-first"></div>
        <div class="tool"><svg><use href="#r-cloud"/></svg></div>
        <div class="tool"><svg><use href="#r-curve"/></svg></div>
        <div class="tool on"><svg><use href="#r-surf"/></svg></div>
        <div class="tool"><svg><use href="#r-fan"/></svg></div>
        <div class="sep"></div>
        <div class="tool"><svg><use href="#r-grid"/></svg></div>
        <div class="tool"><svg><use href="#r-bolt"/></svg></div>
        <div class="tool"><svg><use href="#r-s"/></svg></div>
        <div class="tool"><svg><use href="#r-seg"/></svg></div>
        <div class="tool"><svg><use href="#r-circ"/></svg></div>
        <div class="tool"><svg><use href="#r-wav"/></svg></div>
        <div class="tool"><svg><use href="#r-sf"/></svg></div>
        <div class="tool"><svg><use href="#r-x"/></svg></div>
        <div class="tool on"><svg><use href="#r-no"/></svg></div>
        <div class="grip grip-mid"></div>
        <div class="tool drop"><svg><use href="#r-pal"/></svg></div>
        <div class="sep sep-pal"></div>
        <div class="tool on"><svg><use href="#r-globe"/></svg></div>
        <div class="tool"><svg><use href="#r-cloudsf"/></svg></div>
        <div class="tool"><svg><use href="#r-cloudp"/></svg></div>
        <div class="tool"><svg><use href="#r-tri"/></svg></div>
    </div>
</div>

<div class="main">
    <div class="viewport">
        <svg class="scene" viewBox="0 134 1570 853">
            <defs>
                <radialGradient id="bowlShade" gradientUnits="userSpaceOnUse" cx="790" cy="560" r="375">
                    <stop offset="0" stop-color="#696969"/>
                    <stop offset=".55" stop-color="#626262"/>
                    <stop offset=".75" stop-color="#575757"/>
                    <stop offset=".88" stop-color="#454545"/>
                    <stop offset="1" stop-color="#2c2c2c"/>
                </radialGradient>
                <linearGradient id="rimShade" gradientUnits="userSpaceOnUse" x1="430" y1="350" x2="1100" y2="850">
                    <stop offset="0" stop-color="#7c7c7c"/>
                    <stop offset=".5" stop-color="#717171"/>
                    <stop offset="1" stop-color="#797979"/>
                </linearGradient>
                <clipPath id="shellClip">
                    <path d="M565 269L566 300Q568 312 581 337Q594 362 619.500 393.500Q645 425 675.500 448Q706 471 752 497.500Q798 524 844 540Q890 556 925.500 564Q961 572 986.500 575.500Q1012 579 1045.500 578Q1079 577 1107 572.500Q1135 568 1152 559Q1165 551 1181 539L1196 513L1181 551L1150 600L1141 617Q1143 630 1140 644Q1130 662 1119 678Q1113 695 1106 712Q1099 728 1089 741Q1068 770 1043 791Q1012 815 977 833Q945 850 910 857Q880 864 849 862Q812 860 778 854Q740 846 706 833Q650 817 604 787Q560 770 533 741Q495 712 477 669Q458 637 446 602Q435 572 428 543Q425 522 427 501Q432 470 441 438Q447 412 448 387Q444 372 445 360Q452 350 466 349Q476 348 484 352Q500 333 517 316Q535 298 553 282Z"/>
                </clipPath>
                <filter id="rough" x="-5%" y="-5%" width="110%" height="110%">
                    <feTurbulence type="fractalNoise" baseFrequency=".3" numOctaves="2" seed="4" result="n"/>
                    <feDisplacementMap in="SourceGraphic" in2="n" scale="3"/>
                </filter>
                <filter id="soft" x="-5%" y="-5%" width="110%" height="110%">
                    <feGaussianBlur stdDeviation="1"/>
                </filter>
                <filter id="grain" x="0" y="0" width="100%" height="100%">
                    <feTurbulence type="fractalNoise" baseFrequency=".14" numOctaves="3" seed="9" result="n"/>
                    <feDiffuseLighting in="n" surfaceScale=".55" lighting-color="#fff" result="l"><feDistantLight azimuth="225" elevation="62"/></feDiffuseLighting>
                    <feComposite in="l" in2="SourceGraphic" operator="arithmetic" k1="1.130" k2="0" k3="0" k4="0"/>
                </filter>
            </defs>
            <g filter="url(#rough)">
                <g clip-path="url(#shellClip)">
                    <g filter="url(#grain)">
                        <rect x="415" y="260" width="790" height="610" fill="url(#rimShade)"/>
                        <path filter="url(#soft)" fill="url(#bowlShade)" d="M565 250L640 400L706 450L800 505L1012 560L1165 530L1175 545L1135 608L1119 615Q1110 660 1094 695Q1080 725 1058 749Q1032 778 997 800Q962 820 925 829Q892 838 859 837Q828 836 798 829Q750 820 706 804Q660 785 619 762Q578 735 543 703Q510 668 487 627Q468 595 456 560Q448 525 449 492Q452 452 461 417Q470 385 482 358Q497 335 517 300Q535 280 553 265Z"/>
                    </g>
                </g>
                <g class="teal">
                    <path d="M1127 612l7-16 10-6 14-31 4 2-14 32-10 24z"/>
                    <path d="M1186 540l6-24 4-3-3 16z"/>
                    <path d="M443 360l3-4 0 6zM466 349l10 3-5 1zM1036 584l8-5 3 2-6 3zM1014 580l5-2 1 2zM883 862l6 0 0 2zM1138 636l2 6-2 1zM664 804l5 2-1 1z"/>
                </g>
            </g>
            <g class="holes">
                <circle cx="460" cy="408" r="3.500"/><circle cx="1013" cy="584" r="3.500"/><circle cx="651" cy="432" r="2"/><circle cx="463" cy="580" r="1.500"/>
            </g>
            <g class="pits">
                <circle cx="846" cy="606" r="1.800"/><circle cx="735" cy="664" r="2.500"/><circle cx="792" cy="687" r="1.200"/><circle cx="1039" cy="668" r="1.300"/><circle cx="992" cy="671" r="1.500"/><circle cx="573" cy="683" r="1.300"/><circle cx="712" cy="817" r="2"/><circle cx="671" cy="820" r="1.500"/><circle cx="797" cy="734" r="1"/><circle cx="626" cy="544" r="1"/><circle cx="738" cy="620" r="1"/><circle cx="1000" cy="780" r="1"/>
            </g>
            <g class="bumps">
                <circle cx="540" cy="556" r="2"/><circle cx="780" cy="548" r="2"/><circle cx="720" cy="660" r="2"/><circle cx="860" cy="700" r="1.500"/><circle cx="505" cy="455" r="1.500"/>
            </g>
            <g class="axes-mark">
                <path class="ax-z" d="M59 193L64 182"/>
                <path class="ax-y" d="M59 193L68 179"/>
                <path class="ax-x" d="M59 193L78 202"/>
                <text class="ax-tag" x="61" y="180">Z</text>
                <text class="ax-tag" x="67" y="178">Y</text>
                <text class="ax-tag" x="78" y="200">X</text>
            </g>
        </svg>
    </div>

    <div class="panel">
        <div class="panel-head"><span>图层编辑</span><b>✕</b></div>
        <div class="panel-body">
            <div class="pane">
                <div class="grid-box">
                    <div class="grid-head">
                        <div class="th">图层</div><div class="th th-sort">#</div><div class="th">工作层</div><div class="th">显示</div><div class="th">冻结</div><div class="th">镜像</div><div class="th">属</div>
                    </div>
                    <div class="grid-row">
                        <div class="td td-tree"><span class="tree-line"></span><span class="sel latin">L 1</span></div>
                        <div class="td"></div>
                        <div class="td"><span class="check"></span></div>
                        <div class="td"><span class="check"></span></div>
                        <div class="td"><span class="check"></span></div>
                        <div class="td"><span class="check"></span></div>
                    </div>
                    <div class="grid-fill"></div>
                    <div class="hscroll"><span class="arrow-l"></span><span class="thumb"></span><span class="arrow-r"></span></div>
                </div>
                <div class="side-tools">
                    <svg><use href="#s-globe"/></svg>
                    <svg><use href="#s-cake1"/></svg>
                    <svg><use href="#s-cake"/></svg>
                    <svg><use href="#s-cakes"/></svg>
                    <svg><use href="#s-eye"/></svg>
                    <svg><use href="#s-diamond"/></svg>
                    <svg><use href="#s-up"/></svg>
                </div>
            </div>

            <div class="pane">
                <div class="grid-box">
                    <div class="grid-head">
                        <div class="th">名称</div><div class="th th-sort">#</div><div class="th">图层</div><div class="th">显示</div><div class="th">颜色</div><div class="th">定义材质</div><div class="th">透</div>
                    </div>
                    <div class="grid-row">
                        <div class="td td-tree"><span class="tree-line"></span><span class="latin">1</span></div>
                        <div class="td"></div>
                        <div class="td latin">L 1</div>
                        <div class="td"><span class="check"></span></div>
                        <div class="td"><span class="swatch"></span></div>
                        <div class="td td-text">默认...</div>
                        <div class="td"><span class="check"></span></div>
                    </div>
                    <div class="grid-fill"></div>
                    <div class="hscroll"><span class="arrow-l"></span><span class="thumb"></span><span class="arrow-r"></span></div>
                </div>
                <div class="side-tools side-tools-b">
                    <svg><use href="#s-globe"/></svg>
                    <svg><use href="#s-docs"/></svg>
                    <svg><use href="#s-docs2"/></svg>
                    <svg><use href="#s-clip"/></svg>
                    <svg><use href="#s-clip2"/></svg>
                    <svg><use href="#s-brush"/></svg>
                    <svg><use href="#s-up"/></svg>
                    <svg><use href="#s-down"/></svg>
                </div>
            </div>

            <div class="pane pane-filter">
                <div class="grid-box grid-box-wide">
                    <div class="grid-head">
                        <div class="th">过滤器</div><div class="th th-sort">#</div><div class="th th-blank"></div>
                    </div>
                    <div class="filter-row"><span class="tree-line"></span><span class="latin">A...</span></div>
                    <div class="filter-row"><span class="tree-line"></span><span class="latin">A...</span></div>
                </div>
                <div class="side-tools side-tools-c">
                    <svg><use href="#s-cup"/></svg>
                    <svg><use href="#s-funnel"/></svg>
                    <svg><use href="#s-eye2"/></svg>
                    <svg><use href="#s-up"/></svg>
                    <svg><use href="#s-down"/></svg>
                </div>
            </div>

            <div class="tabs">
                <div class="tab tab-on">过滤器</div>
                <div class="tab tab-b">坐标系</div>
                <div class="tab tab-c">工作平面</div>
                <div class="tab tab-c">视图设置</div>
                <div class="tab tab-d">灯光</div>
                <div class="tab tab-e"></div>
                <div class="tab-nav"><span class="arrow-l"></span></div>
                <div class="tab-nav"><span class="arrow-r arrow-blue"></span></div>
            </div>

            <div class="group-line">
                <span class="group-dash"></span>
                <span class="group-name">跳格</span>
                <span class="group-rule"></span>
                <span class="group-tri"></span>
            </div>
        </div>
    </div>
</div>

<div class="bottom-bar">
    <div class="grip grip-small"></div>
    <div class="combo combo-unit"><span>毫米</span><i></i></div>
    <svg class="bb-icon bb-glasses"><use href="#b-glasses"/></svg>
    <div class="combo combo-view"><span>动态视图</span><i></i></div>
    <div class="combo combo-layer"><span class="latin">L 1</span><i></i></div>
    <svg class="bb-icon"><use href="#b-list"/></svg>
    <svg class="bb-icon bb-lock"><use href="#b-lock"/></svg>
    <svg class="bb-icon"><use href="#b-ball"/></svg>
    <svg class="bb-icon"><use href="#b-plane"/></svg>
    <svg class="bb-icon"><use href="#b-coil"/></svg>
    <svg class="bb-icon"><use href="#b-sphere"/></svg>
    <span class="epsilon">ε</span>
</div>

<div class="status-bar">
    <div class="status-pane status-left"></div>
    <div class="status-pane status-right">使用鼠标左键拾取一个或框选多个对象</div>
</div>

<div class="taskbar">
    <span class="orb"></span>
    <span class="quick quick-a"></span>
    <span class="quick quick-b"></span>
    <div class="task"><i class="t-peach"></i></div>
    <div class="task"><i class="t-blue"></i></div>
    <div class="task"><i class="t-red"></i></div>
    <div class="task"><i class="t-green"></i></div>
    <div class="task"><i class="t-red2"></i></div>
    <div class="task"><i class="t-orange"></i></div>
    <span class="clock">12:04</span>
    <span class="show-desk"></span>
</div>

<!-- floating bits on top of the app -->
<div class="wifi-badge">
    <div class="wifi-circle">
        <svg viewBox="0 0 38 38"><g fill="none" stroke="#fff" stroke-width="2.600" stroke-linecap="round"><path d="M7 16c7-7 17-7 24 0"/><path d="M11.500 21c4.500-4.500 10.500-4.500 15 0"/><path d="M15.500 25.500c2-2 5-2 7 0"/></g><circle cx="19" cy="30" r="1.800" fill="#fff"/></svg>
    </div>
    <div class="wifi-side">
        <svg viewBox="0 0 12 14"><path d="M3 13V4M1 6l2-3 2 3" stroke="#22cc76" stroke-width="1.800" fill="none"/><path d="M9 1v9M7 8l2 3 2-3" stroke="#f5761f" stroke-width="1.800" fill="none"/></svg>
        <svg viewBox="0 0 12 14"><path d="M3 1h2v2h5v10H2V3h1z" fill="#22cc76"/><rect x="4" y="5" width="4" height="3" fill="#fff"/></svg>
    </div>
</div>

<div class="gauge"><span class="gauge-dim"></span><span class="gauge-green"></span><span class="gauge-cyan"></span></div>

<div class="watermark">
    <svg class="wm-logo" viewBox="0 0 72 82">
        <path d="M36 1L71 21v40L36 81 1 61V21z" fill="#a9dcf6" opacity=".85"/>
        <path d="M36 1L71 21c-8-6-24-6-35 0-10 4-25 6-35 0z" fill="#d3ebf7"/>
        <path d="M71 21v40L54 71c12-14 20-32 17-50z" fill="#8bd3f5"/>
        <path d="M36 81L1 61c14 6 20 2 27-4 12 8 26 10 43 4z" fill="#7ccdf5"/>
        <path d="M36 21l18 11v20L36 62 18 52V32z" fill="#e7e7e7"/>
        <path d="M36 24l15 9-15 9-15-9z" fill="#c4e4f6"/>
        <path d="M21 35l14 8v16l-14-8z" fill="#a6d9f4"/>
        <path d="M51 35v16l-14 8V43z" fill="#7cc8ee"/>
    </svg>
    <div class="wm-text">
        <div class="wm-name">3D世界网</div>
        <div class="wm-url">WWW.3DSJW.COM</div>
    </div>
</div>

</body>
</html>
```

FILE: styles.css
```css
* {
    margin: 0;
    padding: 0;
    box-sizing: border-box;
}

body {
    width: 1920px;
    height: 1048px;
    overflow: hidden;
    position: relative;
    display: flex;
    flex-direction: column;
    background-color: #f0f0f0;
    font-family: "Noto Sans CJK SC", "Noto Sans", sans-serif;
    font-size: 12px;
    color: #000;
}

.sprite {
    position: absolute;
}

.latin {
    font-family: "Liberation Serif", "Noto Sans CJK SC", serif;
}

/* title bar */
.title-bar {
    height: 21px;
    flex: none;
    display: flex;
    align-items: center;
    padding-left: 1px;
    border-bottom: 1px solid #e2e8f0;
    background:
        radial-gradient(ellipse 130px 26px at 100px 8px, rgba(190, 215, 235, .75), rgba(190, 215, 235, 0)),
        radial-gradient(ellipse 18px 14px at 648px 16px, #23354a, rgba(35, 53, 74, 0)),
        radial-gradient(ellipse 18px 14px at 718px 18px, #4d9c94, rgba(77, 156, 148, 0)),
        radial-gradient(ellipse 18px 16px at 800px 18px, #b08a4a, rgba(176, 138, 74, 0)),
        radial-gradient(ellipse 20px 16px at 873px 18px, #123c62, rgba(18, 60, 98, 0)),
        radial-gradient(ellipse 16px 14px at 948px 18px, #a8c4d8, rgba(168, 196, 216, 0)),
        radial-gradient(ellipse 16px 14px at 1024px 18px, #a8c4d8, rgba(168, 196, 216, 0)),
        radial-gradient(ellipse 20px 14px at 1101px 18px, #a8cce4, rgba(168, 204, 228, 0)),
        radial-gradient(ellipse 20px 14px at 1179px 18px, #9cc8d4, rgba(156, 200, 212, 0)),
        linear-gradient(90deg, #1a4a84 0%, #1c5a92 50%, #174677 80%, #1c4a7c 100%);
}

.app-logo {
    width: 16px;
    height: 16px;
    flex: none;
}

.title-text {
    margin-left: 4px;
    color: #111;
    font-family: "Noto Sans", sans-serif;
    font-size: 12px;
    letter-spacing: .17px;
    white-space: nowrap;
}

.win-controls {
    margin-left: auto;
    margin-right: 3px;
    align-self: flex-start;
    display: flex;
    height: 18px;
    border: 1px solid #cdd8e4;
    border-top: none;
    border-radius: 0 0 4px 4px;
    overflow: hidden;
}

.win-btn {
    height: 100%;
    display: flex;
    align-items: center;
    justify-content: center;
    color: #fff;
    font-weight: bold;
    font-family: "Liberation Sans", sans-serif;
    font-size: 13px;
}

.win-min {
    width: 28px;
    background: linear-gradient(#6f8fb0, #3f628c);
    border-right: 1px solid #c3d0de;
}

.win-min i {
    width: 10px;
    height: 4px;
    margin-top: 5px;
    background-color: #fff;
}

.win-max {
    width: 26px;
    background: linear-gradient(#6f8fb0, #3f628c);
    border-right: 1px solid #c3d0de;
}

.win-max i {
    width: 8px;
    height: 10px;
    border: 2px solid #fff;
}

.win-close {
    width: 47px;
    background: linear-gradient(#c9a09a, #bb3a2c 60%, #c9503c);
}

/* menu bar */
.menu-bar {
    height: 26px;
    flex: none;
    display: flex;
    align-items: center;
    gap: 11px;
    padding-left: 2px;
    padding-bottom: 2px;
    background-color: #f0f0f0;
    border-bottom: 1px solid #a2a2a2;
}

.menu-logo {
    width: 15px;
    height: 15px;
    margin-right: -5px;
}

.menu-item {
    white-space: nowrap;
    font-size: 12px;
    width: 39px;
}

.menu-item-first { width: 37px; }
.menu-item-o { width: 41px; }
.menu-item-m { width: 43px; }

.mdi-btns {
    margin-left: auto;
    margin-right: 1px;
    display: flex;
    gap: 2px;
}

.mdi-btn {
    width: 13px;
    height: 13px;
    border: 1px solid #666;
    border-radius: 2px;
    display: flex;
    align-items: center;
    justify-content: center;
    background-color: #f4f4f4;
}

.mdi-btn svg {
    width: 11px;
    height: 11px;
}

.mdi-help {
    font: bold 11px/1 "Liberation Sans", sans-serif;
}

.mdi-gap {
    margin-left: 3px;
}

/* main toolbars */
.toolbars {
    height: 87px;
    flex: none;
    padding-top: 3px;
    display: flex;
    flex-direction: column;
    gap: 4px;
    background-color: #f0f0f0;
}

.tool-row {
    height: 39px;
    display: flex;
    align-items: stretch;
    padding-left: 3px;
}

.grip {
    width: 9px;
    flex: none;
    background-image: radial-gradient(circle at 1px 1px, #bbb 1px, transparent 1px);
    background-size: 4px 4px;
    background-position: 1px 0;
    margin-bottom: 1px;
}

.grip-wide {
    width: 11.600px;
}

.grip-last {
    width: 13.600px;
}

.grip-first {
    width: 7.400px;
}

.grip-mid {
    width: 16.500px;
}

.grip-small {
    width: 6px;
    height: 22px;
    align-self: center;
}

.tool {
    width: 41.300px;
    flex: none;
    position: relative;
    display: flex;
    align-items: center;
    justify-content: center;
}

.tool svg {
    width: 33px;
    height: 33px;
}

.row-shadow .tool svg {
    filter: drop-shadow(-2px 3px 2px rgba(0, 0, 0, .3));
}

.row-shadow .tool.flat svg {
    filter: none;
}

.tool.on {
    border: 1px solid #858585;
    border-radius: 3px;
    background: linear-gradient(#f7f7f7, #d9d9d9);
}

.tool.more::after {
    content: "";
    position: absolute;
    right: 3px;
    bottom: 3px;
    width: 6px;
    height: 6px;
    border-radius: 50%;
    border: 1px solid #fff;
    background-color: #999;
}

.tool.drop::after {
    content: "";
    position: absolute;
    right: 0;
    top: 20px;
    border: 3px solid transparent;
    border-top: 4px solid #111;
}

.sep {
    width: 4px;
    flex: none;
    position: relative;
}

.sep::after {
    content: "";
    position: absolute;
    left: 1px;
    top: 1px;
    bottom: 1px;
    width: 1px;
    background-color: #555;
}

.sep-pal {
    width: 7px;
}

.sep-pal::after {
    left: 3px;
}

/* 3d view */
.main {
    height: 853px;
    flex: none;
    display: flex;
}

.viewport {
    width: 1570px;
    flex: none;
    background-color: #0e0e44;
}

.scene {
    display: block;
    width: 1570px;
    height: 853px;
}

.teal {
    fill: #0b9aa3;
}

.holes {
    fill: #0e0e44;
}

.pits {
    fill: #2a2a2a;
}

.bumps {
    fill: #6f6f6f;
}

.axes-mark path {
    stroke-width: 2;
    fill: none;
}

.axes-mark .ax-z { stroke: #10f0f0; stroke-width: 5; }
.axes-mark .ax-y { stroke: #20e020; stroke-width: 3; }
.ax-x { stroke: #f00000; }

.ax-tag {
    font: 9px "Liberation Serif", serif;
    fill: #fff;
}

/* right side panel */
.panel {
    width: 350px;
    flex: none;
    padding-left: 4px;
    display: flex;
    flex-direction: column;
}

.panel-head {
    height: 17px;
    flex: none;
    display: flex;
    align-items: center;
    justify-content: space-between;
    padding: 0 8px 2px 4px;
    background-color: #98b4d2;
    color: #fff;
    font-size: 12px;
}

.panel-head b {
    font-size: 10px;
}

.panel-body {
    width: 344px;
    height: 830px;
    border: 1px solid #aaa;
    padding: 2px 0 0 0;
    display: flex;
    flex-direction: column;
}

.pane {
    height: 266px;
    margin-bottom: 2px;
    flex: none;
    display: flex;
}

.grid-box {
    width: 310px;
    flex: none;
    border: 2px solid #8b929f;
    border-top-width: 1px;
    background-color: #fff;
    display: flex;
    flex-direction: column;
    overflow: hidden;
}

.grid-head {
    height: 20px;
    flex: none;
    display: flex;
    border-bottom: 2px solid #dcdfe3;
    background: linear-gradient(#fff 40%, #f1f1f3);
}

.th {
    width: 50px;
    flex: none;
    padding-left: 5px;
    line-height: 20px;
    font-size: 12px;
    border-right: 1px solid #fff;
    white-space: nowrap;
    overflow: hidden;
    position: relative;
}

.th-sort {
    font-weight: bold;
    font-family: "Liberation Serif", serif;
}

.th-sort::after {
    content: "";
    position: absolute;
    left: 24px;
    top: 6px;
    border: 4.500px solid transparent;
    border-top: none;
    border-bottom: 5px solid #aaa;
}

.th-blank {
    flex: 1;
}

.grid-row {
    height: 18px;
    flex: none;
    display: flex;
    align-items: center;
}

.td {
    width: 50px;
    height: 100%;
    flex: none;
    display: flex;
    align-items: center;
    padding-left: 3px;
    line-height: 1;
}

.td-tree {
    padding-left: 10px;
}

.td-text {
    padding-left: 2px;
    white-space: nowrap;
    letter-spacing: .5px;
}

.tree-line {
    width: 10px;
    height: 9px;
    flex: none;
    margin-top: -8px;
    border-left: 1px dotted #999;
    border-bottom: 1px dotted #999;
}

.sel {
    height: 16px;
    flex: 1;
    margin-left: 0;
    padding-left: 2px;
    line-height: 16px;
    background-color: #f0f0f0;
}

.check {
    width: 12px;
    height: 12px;
    flex: none;
    border: 1px solid #111;
    background: #fff url("data:image/svg+xml,%3Csvg xmlns='http://www.w3.org/2000/svg' viewBox='0 0 10 10'%3E%3Cpath d='M1.500 5l2.500 3 5-6' stroke='%231010d0' stroke-width='2' fill='none'/%3E%3C/svg%3E") center/10px no-repeat;
}

.swatch {
    width: 30px;
    height: 13px;
    margin-left: 7px;
    border: 1px solid #555;
    background-color: #00ffff;
}

.grid-fill {
    flex: 1;
}

.hscroll {
    height: 16px;
    flex: none;
    display: flex;
    align-items: center;
    position: relative;
    background-color: #f3f3f3;
}

.thumb {
    position: absolute;
    left: 18px;
    width: 237px;
    top: 0;
    bottom: 0;
    border: 1px solid #a0a0a0;
    border-radius: 2px;
    background: linear-gradient(#eee, #dcdcdc 50%, #bcbcbc);
}

.arrow-l {
    width: 0;
    height: 0;
    margin-left: 5px;
    border: 4px solid transparent;
    border-left: none;
    border-right: 4px solid #555;
}

.arrow-r {
    width: 0;
    height: 0;
    margin-left: auto;
    margin-right: 5px;
    border: 4px solid transparent;
    border-right: none;
    border-left: 4px solid #555;
}

.arrow-blue {
    border-left-color: #3a4ab0;
}

.side-tools {
    flex: 1;
    display: flex;
    flex-direction: column;
    align-items: center;
    gap: 3px;
    padding-top: 6px;
    overflow: hidden;
}

.side-tools svg {
    width: 22px;
    height: 22px;
    flex: none;
}

.side-tools-b {
    padding-top: 5px;
}

.pane-filter {
    height: 243px;
    margin-bottom: 0;
    margin-top: 1px;
}

.grid-box-wide {
    width: 314px;
}

.grid-box-wide .grid-head {
    margin-top: 1px;
}

.filter-row {
    height: 16.500px;
    flex: none;
    display: flex;
    align-items: center;
    padding-left: 10px;
}

.filter-row .latin {
    margin-left: 1px;
    letter-spacing: 1px;
}

.side-tools-c {
    padding-top: 2px;
}

/* tabs under the filter grid */
.tabs {
    height: 14px;
    flex: none;
    display: flex;
    overflow: hidden;
    line-height: 14px;
    font-size: 12px;
}

.tab {
    flex: none;
    text-align: center;
    background: linear-gradient(#f4f4f4 20%, #d4d4d4 70%, #f0f0f0);
    border-right: 2px solid #999;
    border-bottom: 1px solid #999;
}

.tab-on {
    width: 60px;
    margin-left: 1px;
    background: #fff;
    border-left: 1px solid #999;
    border-right: 1px solid #999;
}

.tab-b { width: 57px; }
.tab-c { width: 70px; }
.tab-d { width: 47px; }
.tab-e { width: 6px; border-right: none; }

.tab-nav {
    width: 15px;
    flex: none;
    display: flex;
    align-items: center;
    background-color: #f0f0f0;
    border: 1px solid #ccc;
}

.group-line {
    height: 20px;
    flex: none;
    display: flex;
    align-items: center;
    padding-left: 2px;
}

.group-dash {
    width: 9px;
    height: 1px;
    background-color: #aaa;
}

.group-name {
    margin: 0 2px;
    font-size: 12px;
}

.group-rule {
    width: 281px;
    height: 1px;
    background-color: #aaa;
}

.group-tri {
    border: 9px solid transparent;
    border-top: none;
    border-bottom: 11px solid #8d8d8d;
    margin-left: -1px;
}

/* bottom strip */
.bottom-bar {
    height: 30px;
    flex: none;
    display: flex;
    align-items: flex-start;
    padding: 4px 0 0 4px;
}

.combo {
    height: 19px;
    flex: none;
    display: flex;
    align-items: center;
    justify-content: space-between;
    background-color: #fff;
    border: 2px solid #aaa;
    padding-left: 3px;
    overflow: hidden;
}

.combo i {
    width: 17px;
    height: 100%;
    flex: none;
    position: relative;
    border: 1px solid #777;
    background-color: #e8e8e8;
}

.combo i::after {
    content: "";
    position: absolute;
    left: 3px;
    top: 5px;
    border: 4px solid transparent;
    border-bottom: none;
    border-top: 4px solid #111;
}

.combo-unit {
    width: 56px;
}

.combo-view {
    width: 107px;
}

.combo-layer {
    width: 71px;
    margin-left: 2px;
}

.bb-icon {
    width: 24px;
    height: 24px;
    flex: none;
    margin-top: -2px;
    margin-left: 4px;
}

.bb-glasses {
    width: 26px;
    margin-left: 6px;
    margin-right: 2px;
}

.combo-layer + .bb-icon {
    margin-left: 1px;
}

.bb-lock {
    margin-left: 3px;
}

.epsilon {
    margin-left: 3px;
    padding: 0 4px;
    border-left: 2px solid #ddd;
    border-right: 2px solid #ddd;
    font: italic bold 21px/19px "Liberation Serif", serif;
}

/* status bar */
.status-bar {
    height: 22px;
    flex: none;
    display: flex;
    padding-left: 3px;
    background-color: #eee;
}

.status-pane {
    height: 20px;
    border-top: 1px solid #a5a5a5;
    border-left: 1px solid #a5a5a5;
    font-size: 12px;
    line-height: 19px;
}

.status-left {
    width: 953px;
}

.status-right {
    width: 940px;
    margin-left: 6px;
    padding-left: 4px;
}

/* windows taskbar, only its top shows */
.taskbar {
    height: 9px;
    flex: none;
    display: flex;
    gap: 4px;
    position: relative;
    overflow: hidden;
    border-top: 1px solid #0c1a28;
    padding-left: 184px;
    background: linear-gradient(90deg, #2c6aa0, #1b5a90 40%, #1f5f96 70%, #16497c);
}

.task {
    width: 158px;
    height: 20px;
    flex: none;
    padding-left: 10px;
    border: 1px solid #d5e4ee;
    border-radius: 3px 3px 0 0;
    background: linear-gradient(90deg, #d6e6ee, #80aec8);
}

.task i {
    display: block;
    width: 20px;
    height: 20px;
    margin-top: 2px;
}

.task .t-peach { background-color: #f6dcc0; width: 30px; }
.task .t-blue { background-color: #5a88d0; border-radius: 50%; }
.task .t-red { background-color: #d84060; width: 14px; }
.task .t-green { background-color: #30b060; width: 26px; margin-left: 6px; }
.task .t-red2 { background-color: #e05060; width: 14px; }
.task .t-orange { background-color: #f09020; border-radius: 50%; }

.orb {
    position: absolute;
    left: 11px;
    top: 2px;
    width: 32px;
    height: 32px;
    border-radius: 50%;
    border: 1px solid #cfe2f2;
    background-color: #3a88c0;
}

.quick {
    position: absolute;
    top: 5px;
    height: 10px;
    background-color: #e8f0f8;
}

.quick-a { left: 78px; width: 22px; }
.quick-b { left: 137px; width: 15px; background-color: #d8c080; }

.clock {
    position: absolute;
    left: 1853px;
    top: 2px;
    color: #fff;
    font: 12px/14px "Noto Sans", sans-serif;
}

.show-desk {
    position: absolute;
    right: 0;
    top: 1px;
    width: 14px;
    height: 10px;
    border: 1px solid #9ab;
    background-color: #4a7aa8;
}

/* wifi helper floating at the right edge */
.wifi-badge {
    position: absolute;
    left: 1855px;
    top: 331px;
    width: 65px;
    height: 51px;
    padding-left: 6px;
    display: flex;
    align-items: center;
    gap: 6px;
    background-color: #fff;
    border-radius: 26px 0 0 26px;
    box-shadow: 0 1px 5px rgba(0, 0, 0, .3);
}

.wifi-circle {
    width: 38px;
    height: 38px;
    flex: none;
    border-radius: 50%;
    background-color: #23cc76;
}

.wifi-circle svg {
    display: block;
}

.wifi-side {
    display: flex;
    flex-direction: column;
    gap: 7px;
}

.wifi-side svg {
    display: block;
    width: 12px;
    height: 14px;
}

/* level gauge at the right edge */
.gauge {
    position: absolute;
    left: 1910px;
    top: 886px;
    width: 10px;
    height: 59px;
    padding: 7px 0 0 3px;
    display: flex;
    flex-direction: column;
    background-color: #4a5058;
    border-radius: 4px 0 0 4px;
}

.gauge span {
    width: 5px;
    background-image: repeating-linear-gradient(#000 0 1px, transparent 1px 2px);
}

.gauge-dim {
    height: 26px;
    background-color: #333;
}

.gauge-green {
    height: 12px;
    background-color: #b0d890;
}

.gauge-cyan {
    height: 10px;
    background-color: #70e0d0;
}

/* site watermark */
.watermark {
    position: absolute;
    left: 1638px;
    top: 953px;
    display: flex;
    gap: 8px;
}

.wm-logo {
    width: 72px;
    height: 82px;
    flex: none;
}

.wm-text {
    padding-top: 9px;
    color: rgba(255, 255, 255, .5);
    white-space: nowrap;
}

.wm-name {
    font: bold 46px/46px "Noto Sans CJK SC", "Liberation Sans", sans-serif;
}

.wm-url {
    font: 12px/14px "Liberation Sans", sans-serif;
    letter-spacing: 4.500px;
    margin-top: 1px;
}
```
